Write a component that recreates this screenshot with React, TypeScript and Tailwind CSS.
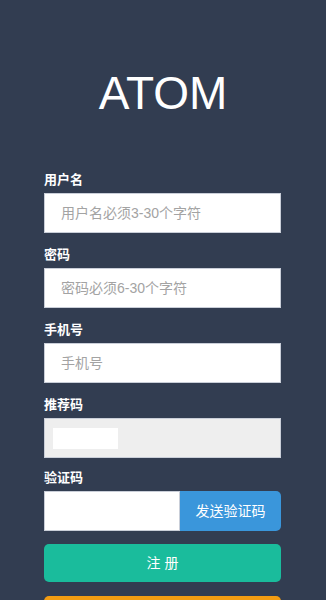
import React from "react";

const cjk = { fontFamily: '"Liberation Sans", "Noto Sans CJK SC", sans-serif' };

function Label({ children }: { children: React.ReactNode }) {
  return (
    <div className="h-[18px] text-[13px] leading-[18px] font-bold text-white mb-[4px]">
      {children}
    </div>
  );
}

function TextInput({ placeholder }: { placeholder: string }) {
  return (
    <input
      className="block w-full h-[40px] bg-white border border-[#c9ced8] pl-4 text-[14px] text-[#333] placeholder:text-[#a3a3a3] outline-none"
      style={cjk}
      placeholder={placeholder}
    />
  );
}

export default function App() {
  return (
    <div className="h-[600px] w-full bg-[#323d51] overflow-hidden" style={cjk}>
      <div className="pt-[70px] text-center text-white text-[46px] leading-[46px]" style={{ fontFamily: '"Liberation Sans", Arial, sans-serif' }}>
        ATOM
      </div>
      <div className="w-[237px] ml-[44px] mt-[55px] flex flex-col">
        <div className="mb-[13px]">
          <Label>用户名</Label>
          <TextInput placeholder="用户名必须3-30个字符" />
        </div>
        <div className="mb-[13px]">
          <Label>密码</Label>
          <TextInput placeholder="密码必须6-30个字符" />
        </div>
        <div className="mb-[13px]">
          <Label>手机号</Label>
          <TextInput placeholder="手机号" />
        </div>
        <div className="mb-[11px]">
          <Label>推荐码</Label>
          <div className="h-[40px] bg-[#eeeeee] border border-[#c9ced8] flex items-center pl-[8px]">
            <div className="w-[65px] h-[21px] bg-white" />
          </div>
        </div>
        <div className="mb-[13px]">
          <Label>验证码</Label>
          <div className="flex h-[40px]">
            <input className="h-full w-[136px] bg-white border border-[#c9ced8] outline-none" />
            <button className="flex-1 h-full bg-[#3a96db] text-white text-[14px] rounded-r-[5px]" style={cjk}>
              发送验证码
            </button>
          </div>
        </div>
        <button className="h-[38px] w-full bg-[#1abc9c] rounded-[5px] text-white text-[14px]" style={cjk}>
          注 册
        </button>
        <button className="mt-[14px] h-[38px] w-full bg-[#f39c12] rounded-[5px]" />
      </div>
    </div>
  );
}
